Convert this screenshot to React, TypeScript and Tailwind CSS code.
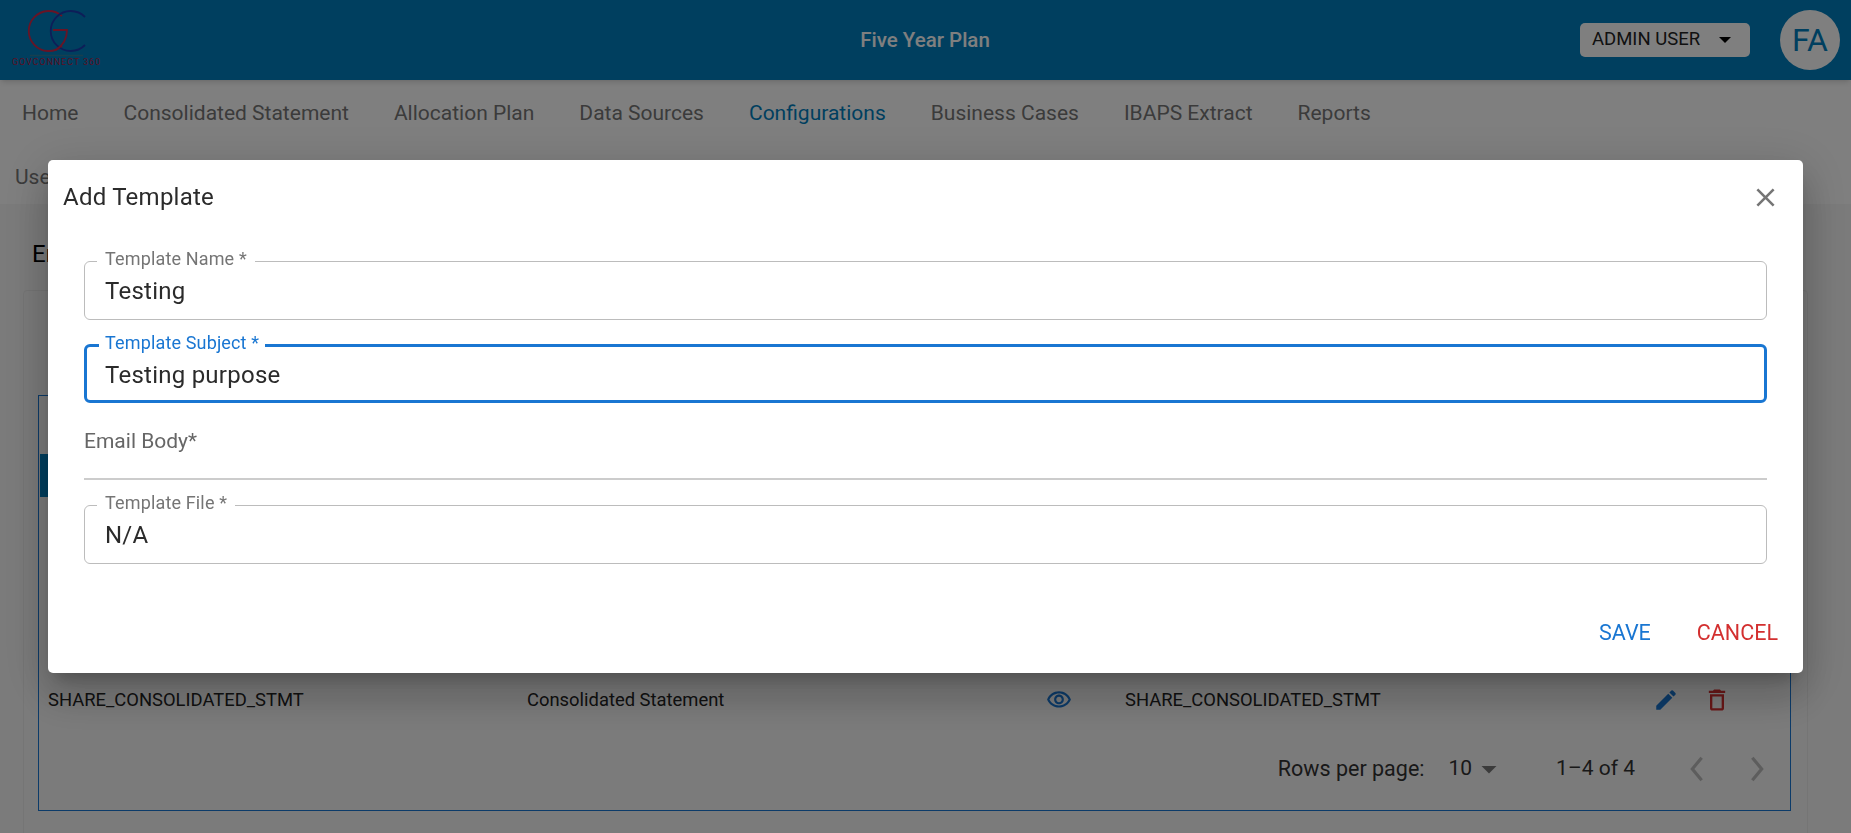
const font = { fontFamily: "Roboto, 'Liberation Sans', sans-serif" };

const navItems = [
  "Home",
  "Consolidated Statement",
  "Allocation Plan",
  "Data Sources",
  "Configurations",
  "Business Cases",
  "IBAPS Extract",
  "Reports",
];

const Icon = ({ d, className }: { d: string; className: string }) => (
  <svg viewBox="0 0 24 24" fill="currentColor" className={className}>
    <path d={d} />
  </svg>
);

const Chevron = ({ d, className }: { d: string; className: string }) => (
  <svg viewBox="0 0 24 24" fill="none" stroke="currentColor" strokeWidth="2.4" className={className}>
    <path d={d} />
  </svg>
);

const Logo = () => (
  <div className="relative h-20 w-[112px] shrink-0">
    <svg viewBox="0 0 112 80" className="absolute inset-0 h-20 w-[112px]" fill="none">
      <path d="M62 16 A20 20 0 1 0 62 46" stroke="#d0284a" strokeWidth="1.8" />
      <path d="M85 17 A20 20 0 1 0 85 45" stroke="#1a3cb0" strokeWidth="1.8" />
      <path d="M53 30 H67 C67 40 62 46 56 50" stroke="#d0284a" strokeWidth="1.8" />
      <path d="M30 55.5 H83" stroke="#2f7f9f" strokeWidth="1.4" />
    </svg>
    <span className="absolute left-[12px] top-[57px] text-[9px] leading-[10px] tracking-[0.9px] whitespace-nowrap text-[#b02248]">
      GOVCONNECT 360
    </span>
  </div>
);

const Field = ({
  label,
  value,
  focused,
}: {
  label: string;
  value: string;
  focused?: boolean;
}) => (
  <fieldset
    className={
      focused
        ? "h-[68px] rounded-[6px] border-[3px] border-solid border-[#1976d2]"
        : "h-[69px] rounded-[6px] border-[1px] border-solid border-[#bcbcbc]"
    }
  >
    {/* legend is 21px tall so the border lands on a whole pixel */}
    <legend
      className={
        focused
          ? "ml-[12px] px-[6px] pb-[5px] text-[18px] leading-[16px] tracking-[0.15px] text-[#1976d2]"
          : "ml-[12px] px-[8px] pb-[5px] text-[18px] leading-[16px] tracking-[0.15px] text-[#757575]"
      }
    >
      {label}
    </legend>
    <div
      className={
        focused
          ? "pl-[18px] text-[24px] leading-[38px] tracking-[0.25px] text-[#2b2b2b]"
          : "pl-[20px] text-[24px] leading-[38px] tracking-[0.25px] text-[#2b2b2b]"
      }
    >
      {value}
    </div>
  </fieldset>
);

export default function App() {
  return (
    <div style={font} className="h-screen overflow-hidden bg-white">
      {/* top bar */}
      <header className="relative z-10 flex h-20 items-center bg-[#007ebe] shadow-md">
        <Logo />
        <div className="flex-1 pl-[158px] text-center text-[20.5px] font-medium text-white">
          Five Year Plan
        </div>
        <button className="mr-[30px] flex h-[34px] w-[170px] items-center rounded-[5px] bg-white pl-[12px] text-[18.5px] text-[#222]">
          ADMIN USER
          <span className="ml-[19px] h-0 w-0 border-x-[6px] border-t-[6px] border-x-transparent border-t-black" />
        </button>
        <div className="mr-[11px] flex h-[60px] w-[60px] items-center justify-center rounded-full bg-white text-[32px] text-[#007ebe]">
          FA
        </div>
      </header>

      {/* nav tabs */}
      <nav className="flex h-[65px] items-center gap-[45px] pl-[22px] pt-[2px] text-[21px] text-[#777]">
        {navItems.map((item) => (
          <span key={item} className={item === "Configurations" ? "text-[#007ebe]" : ""}>
            {item}
          </span>
        ))}
      </nav>
      <div className="flex h-[59px] items-start pl-[15px] pt-[19px] text-[21px] leading-[26px] text-[#777]">
        Users
      </div>

      {/* page body */}
      <main className="h-[629px] bg-[#f7f7f7] pl-[23px] pr-[43px]">
        <h2 className="pl-[9px] pt-[36px] text-[24px] leading-[28px] text-black">Email Templates</h2>
        <section className="mt-[22px] h-[600px] rounded border border-[#eaeaea] bg-[#f7f7f7] pl-[14px] pr-[16px] pt-[104px]">
          <div className="h-[416px] border border-[#1976d2] px-px pt-[58px]">
            <div className="h-[43px] bg-[#007ebe]" />
            {/* other rows sit behind the dialog */}
            <div className="h-[174px]" />
            <div className="flex h-[58px] items-center pl-[8px] text-[18.4px] text-[#222]">
              <span className="w-[479px]">SHARE_CONSOLIDATED_STMT</span>
              <span className="w-[512px]">Consolidated Statement</span>
              <span className="flex w-[40px] justify-center">
                <Icon
                  className="h-[26px] w-[26px] text-[#1976d2]"
                  d="M12 6c3.79 0 7.17 2.13 8.82 5.5C19.17 14.87 15.79 17 12 17s-7.17-2.13-8.82-5.5C4.83 8.13 8.21 6 12 6m0-2C7 4 2.73 7.11 1 11.5 2.73 15.89 7 19 12 19s9.27-3.11 11-7.5C21.27 7.11 17 4 12 4zm0 5c1.38 0 2.5 1.12 2.5 2.5S13.38 14 12 14s-2.5-1.12-2.5-2.5S10.62 9 12 9m0-2c-2.48 0-4.5 2.02-4.5 4.5S9.52 16 12 16s4.5-2.02 4.5-4.5S14.48 7 12 7z"
                />
              </span>
              <span className="ml-[46px] w-[528px]">SHARE_CONSOLIDATED_STMT</span>
              <Icon
                className="h-[26px] w-[26px] text-[#1976d2]"
                d="M3 17.25V21h3.75L17.81 9.94l-3.75-3.75L3 17.25zM20.71 7.04c.39-.39.39-1.02 0-1.41l-2.34-2.34a.9959.9959 0 0 0-1.41 0l-1.83 1.83 3.75 3.75 1.83-1.83z"
              />
              <Icon
                className="ml-[24px] h-7 w-7 text-[#d32f2f]"
                d="M6 19c0 1.1.9 2 2 2h8c1.1 0 2-.9 2-2V7H6v12zM8 9h8v10H8V9zm7.5-5-1-1h-5l-1 1H5v2h14V4z"
              />
            </div>
            {/* pagination */}
            <div className="flex h-[80px] items-center justify-end pr-[16px] text-[21px] text-[#333]">
              <span className="text-[21.5px]">Rows per page:</span>
              <span className="ml-[24px]">10</span>
              <Icon className="-ml-[1px] h-9 w-9 text-[#777]" d="M7 10l5 5 5-5z" />
              <span className="ml-[49px]">1–4 of 4</span>
              <Chevron className="ml-[46px] h-8 w-8 text-[#bbb]" d="M15.5 3.5 8.5 12l7 8.5" />
              <Chevron className="ml-[28px] h-8 w-8 text-[#bbb]" d="M8.5 3.5 15.5 12l-7 8.5" />
            </div>
          </div>
        </section>
      </main>

      {/* modal */}
      <div className="fixed inset-0 z-50 flex items-center justify-center bg-black/50">
        <div className="h-[513px] w-[1755px] rounded-[5px] bg-white shadow-[0_11px_15px_-7px_rgba(0,0,0,0.2),0_24px_38px_3px_rgba(0,0,0,0.14),0_9px_46px_8px_rgba(0,0,0,0.12)]">
          <div className="flex h-[74px] items-center justify-between pl-[15px] pr-[22px]">
            <h1 className="text-[24px] tracking-[0.25px] text-[#2b2b2b]">Add Template</h1>
            <Icon
              className="h-[31px] w-[31px] text-[#757575]"
              d="M19 6.41 17.59 5 12 10.59 6.41 5 5 6.41 10.59 12 5 17.59 6.41 19 12 13.41 17.59 19 19 17.59 13.41 12z"
            />
          </div>
          <div className="px-[36px] pt-[17px]">
            <Field label="Template Name *" value="Testing" />
            <div className="mt-[15px]">
              <Field label="Template Subject *" value="Testing purpose" focused />
            </div>
            <div className="flex h-[75px] items-center pt-[2px] text-[21px] text-[#666]">Email Body*</div>
            <div className="h-[2px] bg-[#ccc]" />
            <div className="mt-[15px]">
              <Field label="Template File *" value="N/A" />
            </div>
          </div>
          <div className="mt-[54px] flex justify-end gap-[46px] pr-[25px] text-[21.5px] leading-[30px]">
            <span className="text-[#1976d2]">SAVE</span>
            <span className="text-[#d32f2f]">CANCEL</span>
          </div>
        </div>
      </div>
    </div>
  );
}
